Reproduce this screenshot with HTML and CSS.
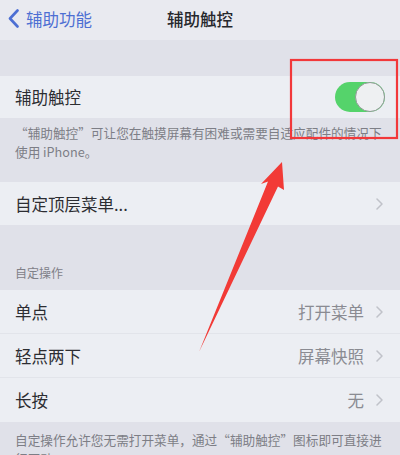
FILE: index.html
```html
<!DOCTYPE html>
<html lang="zh-CN">
<head>
<meta charset="utf-8">
<title>辅助触控</title>
<link rel="stylesheet" href="styles.css">
</head>
<body>
<div class="screen">
  <header class="nav">
    <div class="back">
      <svg class="back-icon" width="11" height="19" viewBox="0 0 11 19"><path d="M9.5 1.5 L2 9.5 L9.5 17.5" fill="none" stroke="currentColor" stroke-width="2.6" stroke-linecap="round" stroke-linejoin="round"/></svg>
      <span>辅助功能</span>
    </div>
    <div class="title">辅助触控</div>
    <div></div>
  </header>

  <div class="spacer-top"></div>

  <div class="group">
    <div class="row row-toggle">
      <span class="label">辅助触控</span>
      <span class="toggle"></span>
    </div>
  </div>
  <p class="footnote footnote-1">“辅助触控”可让您在触摸屏幕有困难或需要自适应配件的情况下使用 iPhone。</p>

  <div class="group">
    <div class="row row-menu">
      <span class="label">自定顶层菜单...</span>
      <svg class="chev" width="7" height="12" viewBox="0 0 7 12"><path d="M1 1 L6 6 L1 11" fill="none" stroke="currentColor" stroke-width="1.5" stroke-linecap="round" stroke-linejoin="round"/></svg>
    </div>
  </div>

  <div class="section-header">自定操作</div>
  <div class="group">
    <div class="row row-action sep">
      <span class="label">单点</span>
      <span class="value">打开菜单<svg class="chev" width="7" height="12" viewBox="0 0 7 12"><path d="M1 1 L6 6 L1 11" fill="none" stroke="currentColor" stroke-width="1.5" stroke-linecap="round" stroke-linejoin="round"/></svg></span>
    </div>
    <div class="row row-action sep">
      <span class="label">轻点两下</span>
      <span class="value">屏幕快照<svg class="chev" width="7" height="12" viewBox="0 0 7 12"><path d="M1 1 L6 6 L1 11" fill="none" stroke="currentColor" stroke-width="1.5" stroke-linecap="round" stroke-linejoin="round"/></svg></span>
    </div>
    <div class="row row-action">
      <span class="label">长按</span>
      <span class="value">无<svg class="chev" width="7" height="12" viewBox="0 0 7 12"><path d="M1 1 L6 6 L1 11" fill="none" stroke="currentColor" stroke-width="1.5" stroke-linecap="round" stroke-linejoin="round"/></svg></span>
    </div>
  </div>
  <p class="footnote footnote-2">自定操作允许您无需打开菜单，通过“辅助触控”图标即可直接进行互动。</p>

  <svg class="annotation" width="400" height="455" viewBox="0 0 400 455">
    <rect x="291" y="60" width="106" height="78" fill="none" stroke="#f2383a" stroke-width="2.2"/>
    <polygon points="282,162 284,190 278,186.5 199,352 268,181.5 261,184" fill="#f23a36"/>
  </svg>
</div>
</body>
</html>
```

FILE: styles.css
```css
html, body {
  margin: 0;
  padding: 0;
}
body {
  background: #e0e1e9;
  font-family: "Noto Sans CJK SC", "Noto Sans", sans-serif;
  color: #2c2d32;
}
.screen {
  position: relative;
  width: 400px;
  height: 455px;
  overflow: hidden;
  background: #e0e1e9;
}
.nav {
  height: 40px;
  display: grid;
  grid-template-columns: 1fr auto 1fr;
  align-items: center;
  background: #e9eaf0;
  padding: 0 8px;
  box-sizing: border-box;
}
.back {
  display: flex;
  align-items: center;
  gap: 7px;
  color: #4d6fd3;
  font-size: 16.5px;
  line-height: 20px;
  margin-top: -3px;
}
.back-icon {
  display: block;
}
.title {
  font-size: 16.5px;
  font-weight: 500;
  line-height: 20px;
  color: #26272c;
  margin-top: -3px;
}
.spacer-top {
  height: 36px;
}
.group {
  background: #eceef3;
}
.row {
  display: flex;
  align-items: center;
  justify-content: space-between;
  padding: 0 17px 0 15px;
  box-sizing: border-box;
}
.label {
  font-size: 16.5px;
  line-height: 20px;
}
.row-toggle {
  height: 42px;
  padding-right: 15px;
}
.row-menu {
  height: 43px;
}
.row-action {
  height: 44px;
}
.sep {
  border-bottom: 1px solid #e2e4ea;
}
.toggle {
  position: relative;
  width: 50px;
  height: 30px;
  border-radius: 15px;
  background: #55d36b;
}
.toggle::after {
  content: "";
  position: absolute;
  right: 0;
  top: 0;
  width: 28px;
  height: 28px;
  border-radius: 50%;
  background: #eef0f2;
  border: 1px solid #8f9a95;
}
.chev {
  display: block;
  color: #c0c2c9;
}
.value {
  display: flex;
  align-items: center;
  gap: 12px;
  font-size: 16.5px;
  line-height: 20px;
  color: #8a8b92;
}
.footnote {
  margin: 0;
  font-size: 12.65px;
  line-height: 19px;
  color: #7d7e86;
  padding: 0 12px 0 15px;
}
.footnote-1 {
  padding-top: 5px;
  padding-bottom: 21px;
}
.footnote-2 {
  padding-top: 8px;
}
.section-header {
  font-size: 12px;
  line-height: 16px;
  color: #7f8088;
  padding: 40px 15px 9px;
}
.annotation {
  position: absolute;
  left: 0;
  top: 0;
  pointer-events: none;
}
```
